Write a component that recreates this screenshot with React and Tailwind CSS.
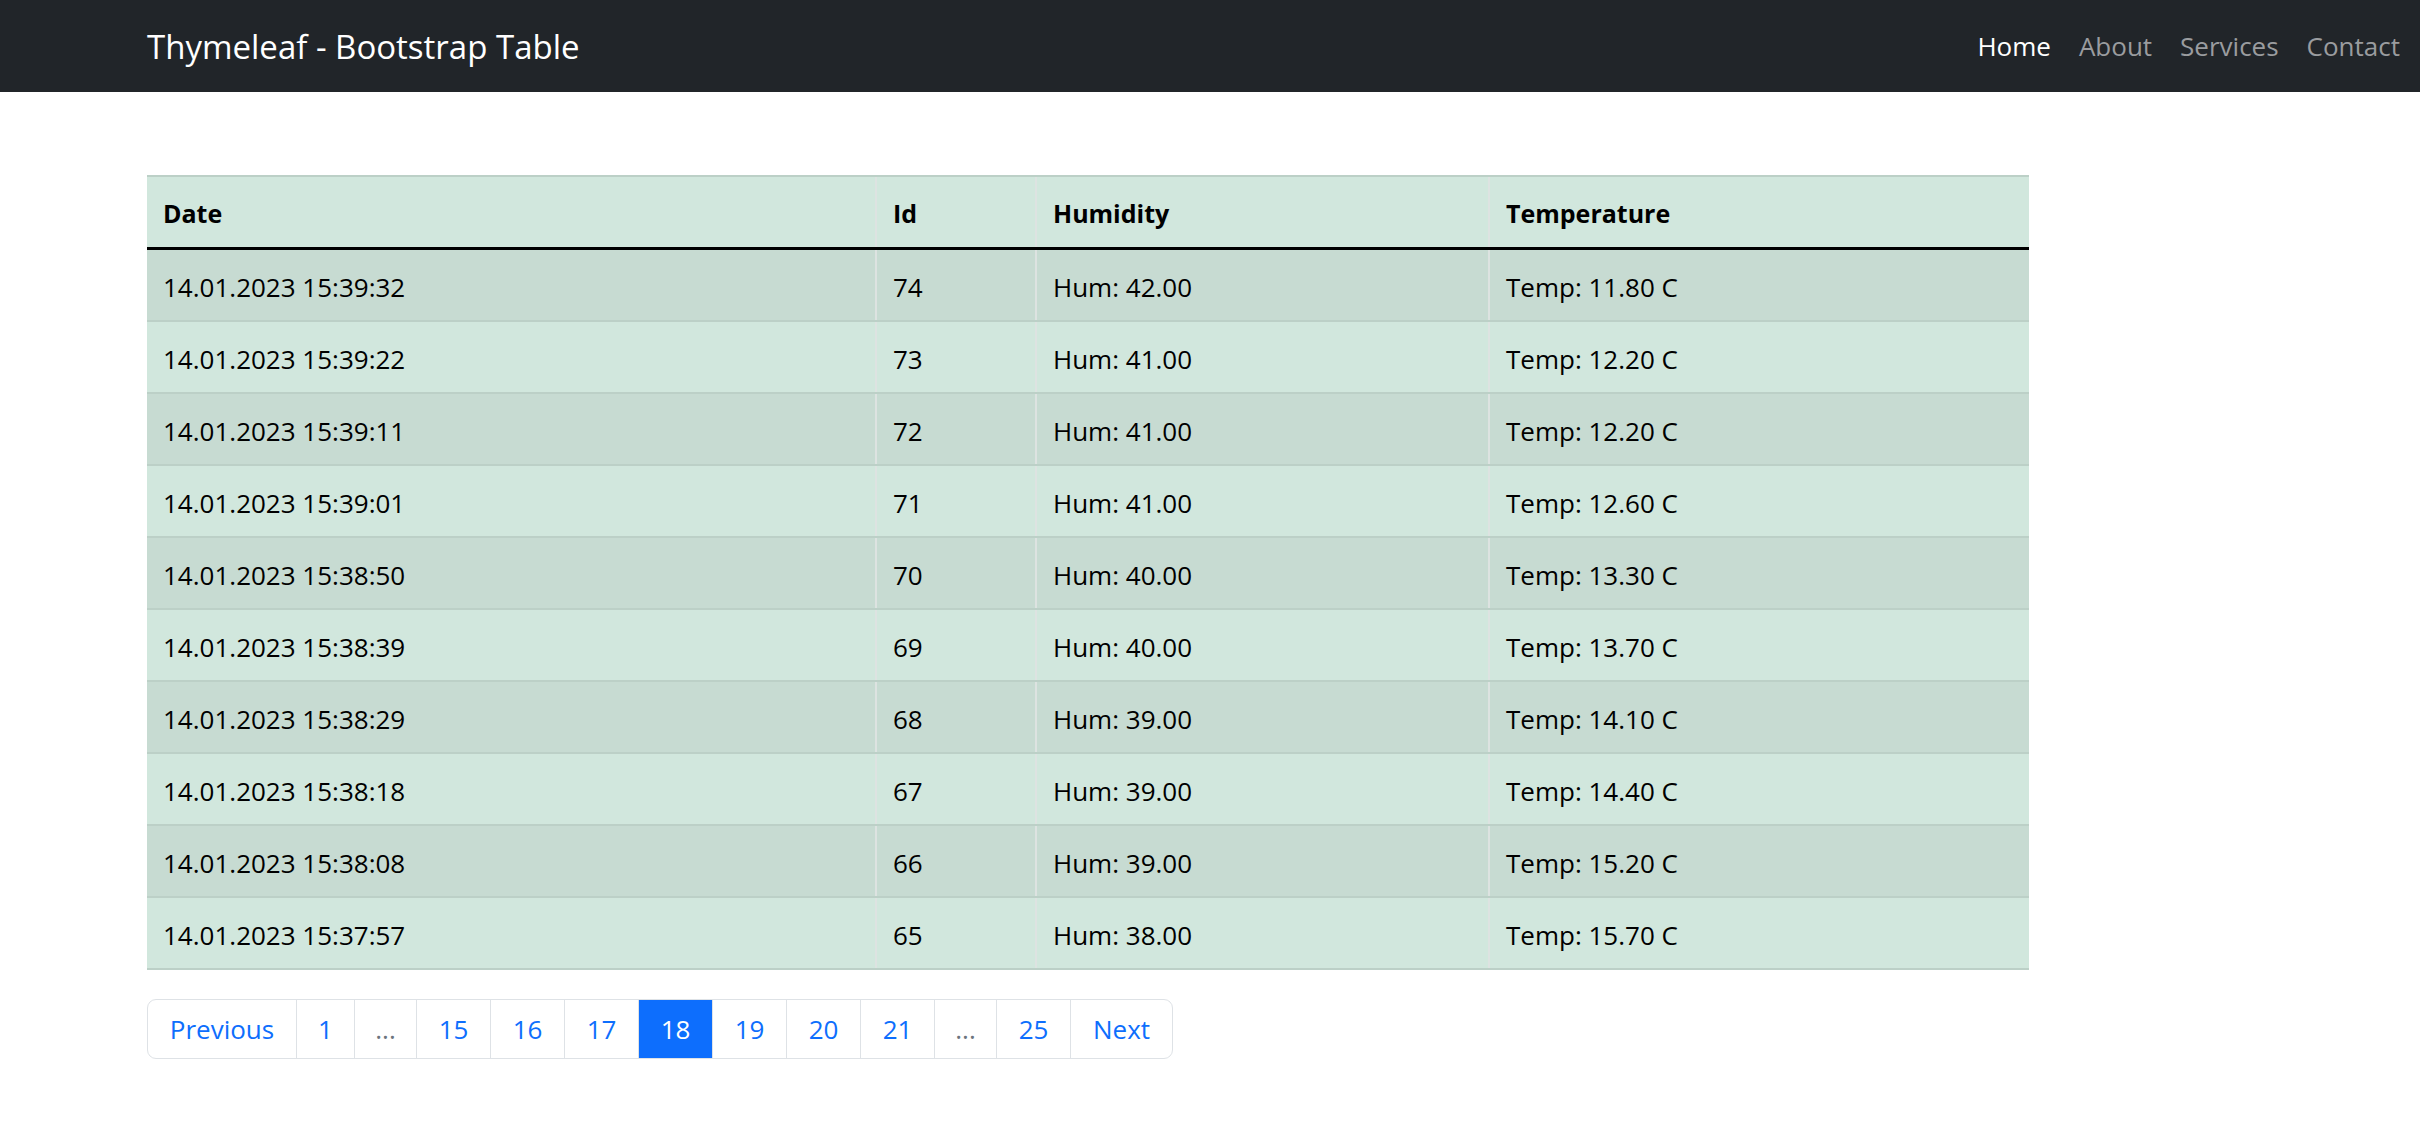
import React from "react";

const rows = [
  ["14.01.2023 15:39:32", "74", "Hum: 42.00", "Temp: 11.80 C"],
  ["14.01.2023 15:39:22", "73", "Hum: 41.00", "Temp: 12.20 C"],
  ["14.01.2023 15:39:11", "72", "Hum: 41.00", "Temp: 12.20 C"],
  ["14.01.2023 15:39:01", "71", "Hum: 41.00", "Temp: 12.60 C"],
  ["14.01.2023 15:38:50", "70", "Hum: 40.00", "Temp: 13.30 C"],
  ["14.01.2023 15:38:39", "69", "Hum: 40.00", "Temp: 13.70 C"],
  ["14.01.2023 15:38:29", "68", "Hum: 39.00", "Temp: 14.10 C"],
  ["14.01.2023 15:38:18", "67", "Hum: 39.00", "Temp: 14.40 C"],
  ["14.01.2023 15:38:08", "66", "Hum: 39.00", "Temp: 15.20 C"],
  ["14.01.2023 15:37:57", "65", "Hum: 38.00", "Temp: 15.70 C"],
];

const pages = [
  { t: "Previous", w: "w-[148px]" },
  { t: "1", w: "w-[58px]" },
  { t: "...", w: "w-[62px]", muted: true },
  { t: "15", w: "w-[74px]" },
  { t: "16", w: "w-[74px]" },
  { t: "17", w: "w-[74px]" },
  { t: "18", w: "w-[74px]", active: true },
  { t: "19", w: "w-[74px]" },
  { t: "20", w: "w-[74px]" },
  { t: "21", w: "w-[74px]" },
  { t: "...", w: "w-[62px]", muted: true },
  { t: "25", w: "w-[74px]" },
  { t: "Next", w: "w-[102px]" },
];

const colW = ["w-[728px]", "w-[160px]", "w-[453px]", "w-[541px]"];

export default function App() {
  return (
    <div className="min-h-[1128px] bg-white font-['Segoe_UI','Open_Sans','Noto_Sans',sans-serif] text-[26px] leading-[36px] text-[#212529]">
      <nav className="h-[92px] bg-[#212529] flex items-center justify-between pl-[147px] pr-[6px]">
        <div className="text-[33px] leading-[45px] text-white">Thymeleaf - Bootstrap Table</div>
        <div className="flex items-center">
          <a className="px-[14px] text-white">Home</a>
          <a className="px-[14px] text-[#9a9c9f]">About</a>
          <a className="px-[14px] text-[#9a9c9f]">Services</a>
          <a className="px-[14px] text-[#9a9c9f]">Contact</a>
        </div>
      </nav>
      <main className="pl-[147px] pt-[83px]">
        <div className="w-[1882px] text-black">
          <div className="flex border-t-2 border-[#bcd0c7] bg-[#d1e7dd] border-b-[3px] border-b-black">
            {["Date", "Id", "Humidity", "Temperature"].map((h, i) => (
              <div
                key={h}
                className={`${colW[i]} h-[70px] flex items-center px-[16px] pt-[2px] text-[25px] font-bold ${i > 0 ? "border-l-2 border-[#dde3e1]" : ""}`}
              >
                {h}
              </div>
            ))}
          </div>
          {rows.map((r, ri) => (
            <div
              key={ri}
              className={`flex border-b-2 border-[#bcd0c7] ${ri % 2 === 0 ? "bg-[#c7dbd2]" : "bg-[#d1e7dd]"}`}
            >
              {r.map((c, i) => (
                <div
                  key={i}
                  className={`${colW[i]} h-[70px] flex items-center px-[16px] pt-[3px] ${i > 0 ? "border-l-2 border-[#dde3e1]" : ""}`}
                >
                  {c}
                </div>
              ))}
            </div>
          ))}
        </div>
        <div className="mt-[29px] inline-flex h-[60px] rounded-[9px] border border-[#dee2e6] overflow-hidden">
          {pages.map((p, i) => (
            <div
              key={i}
              className={`${p.w} flex items-center justify-center ${i > 0 ? "border-l border-[#dee2e6]" : ""} ${
                p.active ? "bg-[#0d6efd] text-white border-[#0d6efd]" : p.muted ? "text-[#6c757d]" : "text-[#0d6efd]"
              }`}
            >
              {p.t}
            </div>
          ))}
        </div>
      </main>
    </div>
  );
}
